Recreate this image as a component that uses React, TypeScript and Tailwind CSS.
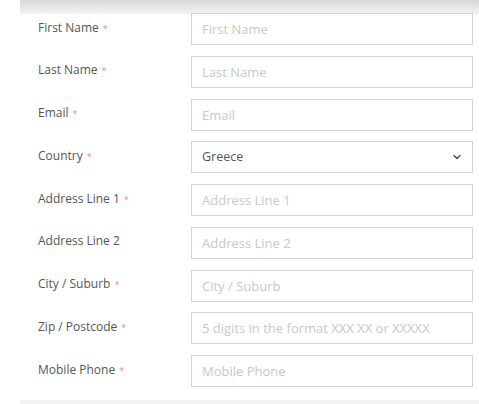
import { ChevronDown } from 'lucide-react'

interface Field {
  label:       string
  placeholder: string
  required:    boolean
  select?:     string
}

const FIELDS: Field[] = [
  { label: 'First Name',     placeholder: 'First Name',     required: true },
  { label: 'Last Name',      placeholder: 'Last Name',      required: true },
  { label: 'Email',          placeholder: 'Email',          required: true },
  { label: 'Country',        placeholder: '',               required: true, select: 'Greece' },
  { label: 'Address Line 1', placeholder: 'Address Line 1', required: true },
  { label: 'Address Line 2', placeholder: 'Address Line 2', required: false },
  { label: 'City / Suburb',  placeholder: 'City / Suburb',  required: true },
  { label: 'Zip / Postcode', placeholder: '5 digits in the format XXX XX or XXXXX', required: true },
  { label: 'Mobile Phone',   placeholder: 'Mobile Phone',   required: true },
]

export default function App() {
  return (
    <div
      className="w-[479px] h-[404px] bg-white overflow-hidden flex flex-col"
      style={{ fontFamily: '"Open Sans", "Noto Sans", sans-serif' }}
    >
      <div className="ml-[20px] h-[14px] shrink-0 bg-gradient-to-b from-[#d8d8d8] to-[#f3f3f3]" />

      <form className="-mt-px flex flex-col gap-[10.75px] pl-[38px] pr-[6px]">
        {FIELDS.map(f => (
          <div key={f.label} className="flex items-center h-[32px]">
            <label className="w-[153px] shrink-0 text-[12px] text-[#555] leading-none -mt-[3px]">
              {f.label}
              {f.required && <span className="ml-[4px] text-[9px] text-[#f08a8a]">*</span>}
            </label>
            {f.select ? (
              <div className="flex-1 h-full flex items-center justify-between border border-[#d4d4d4] pl-[10px] pr-[9px] text-[12.5px] text-[#555]">
                {f.select}
                <ChevronDown className="w-[12px] h-[12px] text-[#444]" strokeWidth={2.5} />
              </div>
            ) : (
              <input
                placeholder={f.placeholder}
                className="flex-1 h-full border border-[#d4d4d4] px-[10px] text-[13px] text-[#555] placeholder:text-[#c8c8c8] outline-none"
              />
            )}
          </div>
        ))}
      </form>

      <div className="mt-auto ml-[20px] h-[4px] bg-[#f3f3f3]" />
    </div>
  )
}
